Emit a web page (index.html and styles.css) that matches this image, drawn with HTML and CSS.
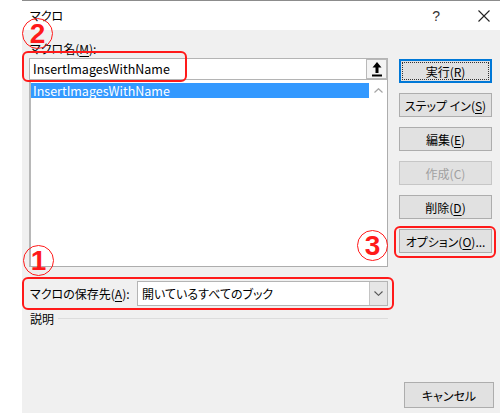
FILE: index.html
```html
<!DOCTYPE html>
<html lang="ja">
<head>
<meta charset="utf-8">
<title>マクロ</title>
<link rel="stylesheet" href="styles.css">
</head>
<body>
<div class="page">
  <div class="gutter"></div>
  <div class="dialog">
    <div class="titlebar">
      <span class="title">マクロ</span>
      <span class="help">?</span>
      <span class="close"><svg width="12" height="12" viewBox="0 0 12 12"><path d="M0.5 0.5 L11.5 11.5 M11.5 0.5 L0.5 11.5" stroke="#222" stroke-width="1.1" fill="none"/></svg></span>
    </div>
    <div class="content">
      <div class="main">
        <div class="name-label">マクロ名(<u>M</u>):</div>
        <div class="name-input">
          <span class="name-text">InsertImagesWithName</span>
          <span class="up-btn"><svg width="10" height="15" viewBox="0 0 10 15"><path d="M5 0 L9.5 5.5 L6.5 5.5 L6.5 11 L3.5 11 L3.5 5.5 L0.5 5.5 Z" fill="#000"/><rect x="0" y="12.5" width="10" height="2" fill="#000"/></svg></span>
        </div>
        <div class="listbox">
          <div class="items">
            <div class="item selected">InsertImagesWithName</div>
          </div>
          <div class="vscroll"><svg width="9" height="5" viewBox="0 0 9 5"><path d="M0.5 4.5 L4.5 0.7 L8.5 4.5" stroke="#a6a6a6" stroke-width="1.2" fill="none"/></svg></div>
        </div>
        <div class="store-row">
          <span class="store-label">マクロの保存先(<u>A</u>):</span>
          <div class="combo">
            <span class="combo-text">開いているすべてのブック</span>
            <span class="combo-btn"><svg width="9" height="5" viewBox="0 0 9 5"><path d="M0.5 0.5 L4.5 4.3 L8.5 0.5" stroke="#555" stroke-width="1.1" fill="none"/></svg></span>
          </div>
        </div>
        <div class="desc">
          <span>説明</span>
          <span class="rule"></span>
        </div>
      </div>
      <div class="side">
        <button class="btn default"><span class="focus">実行(<u>R</u>)</span></button>
        <button class="btn">ステップ イン(<u>S</u>)</button>
        <button class="btn">編集(<u>E</u>)</button>
        <button class="btn disabled">作成(C)</button>
        <button class="btn">削除(<u>D</u>)</button>
        <button class="btn">オプション(<u>O</u>)...</button>
        <button class="btn cancel">キャンセル</button>
      </div>
    </div>
    <span class="mark mark-2">2</span>
    <span class="box box-name"></span>
    <span class="mark mark-3">3</span>
    <span class="box box-option"></span>
    <span class="mark mark-1">1</span>
    <span class="box box-store"></span>
  </div>
</div>
</body>
</html>
```

FILE: styles.css
```css
* { box-sizing: border-box; }
html, body { margin: 0; padding: 0; }
body {
  width: 500px;
  height: 413px;
  overflow: hidden;
  background: #ffffff;
  font-family: "Noto Sans CJK JP", "Noto Sans", sans-serif;
  font-size: 12px;
  font-feature-settings: "palt";
  color: #000;
}
u { text-underline-offset: 2px; text-decoration-thickness: 1px; }

.page { display: flex; height: 413px; }
.gutter { width: 22px; flex: none; }
.dialog {
  position: relative;
  flex: 1;
  display: flex;
  flex-direction: column;
}

.titlebar {
  height: 30px;
  flex: none;
  background: #fff;
  border-top: 1px solid #8c8c8c;
  display: flex;
  align-items: center;
  padding-left: 8px;
}
.title { font-size: 12px; line-height: 14px; }
.help {
  margin-left: auto;
  font-family: "Liberation Sans", sans-serif;
  font-size: 14px;
  color: #333;
  margin-right: 38px;
}
.close { display: flex; margin-right: 10px; }

.content {
  flex: 1;
  background: #f0f0f0;
  display: flex;
}

.main {
  width: 366px;
  padding-left: 7px;
  display: flex;
  flex-direction: column;
}
.name-label {
  margin-top: 11px;
  height: 17px;
  line-height: 16px;
  padding-left: 1px;
}
.name-input {
  height: 22px;
  background: #fff;
  border: 1px solid #b4b4b4;
  display: flex;
  align-items: center;
}
.name-text {
  padding-left: 3px;
  font-size: 12.5px;
  line-height: 16px;
}
.up-btn {
  margin-left: auto;
  width: 21px;
  height: 20px;
  background: #f4f4f4;
  border: 1px solid #b9b9b9;
  display: flex;
  align-items: center;
  justify-content: center;
}

.listbox {
  height: 187px;
  background: #fff;
  border: 1px solid #adadad;
  border-left: 2px solid #b8b8b8;
  border-top: none;
  display: flex;
}
.items { flex: 1; padding-top: 3px; }
.item {
  height: 15px;
  line-height: 15px;
  padding-left: 2px;
  font-size: 12.5px;
}
.item.selected { background: #3399ff; color: #fff; }
.vscroll {
  width: 18px;
  display: flex;
  justify-content: center;
  padding-top: 8px;
}

.store-row {
  margin-top: 14px;
  height: 25px;
  display: flex;
  align-items: center;
  padding-left: 1px;
}
.store-label { line-height: 16px; }
.combo {
  margin-left: auto;
  width: 251px;
  height: 25px;
  background: #fff;
  border: 1px solid #b4b4b4;
  display: flex;
  align-items: center;
}
.combo-text { padding-left: 4px; line-height: 16px; }
.combo-btn {
  margin-left: auto;
  width: 18px;
  height: 23px;
  background: #e6e6e6;
  border-left: 1px solid #c4c4c4;
  display: flex;
  align-items: center;
  justify-content: center;
}

.desc {
  margin-top: 4px;
  display: flex;
  align-items: center;
  padding-left: 1px;
  height: 16px;
}
.rule {
  flex: 1;
  height: 1px;
  background: #dcdcdc;
  margin-left: 4px;
}

.side {
  margin-left: 11px;
  width: 95px;
  display: flex;
  flex-direction: column;
  padding-top: 29px;
  gap: 10px;
}
.btn {
  width: 93px;
  height: 24px;
  padding: 0;
  font: inherit;
  font-size: 12px;
  color: #000;
  background: #e1e1e1;
  border: 1px solid #adadad;
  display: flex;
  align-items: center;
  justify-content: center;
}
.btn.default {
  border: 1px solid #0078d7;
  box-shadow: inset 0 0 0 1px #0078d7;
  padding: 2px;
}
.focus {
  width: 100%;
  height: 100%;
  border: 1px dotted #333;
  display: flex;
  align-items: center;
  justify-content: center;
}
.btn.disabled { color: #a0a0a0; border-color: #c6c6c6; }
.btn.cancel {
  margin-top: auto;
  margin-bottom: 5px;
  margin-left: 5px;
  width: 90px;
  height: 26px;
}

.mark {
  position: absolute;
  width: 31px;
  height: 31px;
  border: 1.3px solid #ff1a1a;
  border-radius: 50%;
  color: #ff1a1a;
  font-family: "Liberation Sans", sans-serif;
  font-weight: bold;
  font-size: 28px;
  line-height: 30px;
  text-align: center;
}
.mark-2 { left: 0; top: 18px; }
.mark-3 { left: 335px; top: 230px; }
.mark-1 { left: 1px; top: 245px; }

.box {
  position: absolute;
  border: 2px solid #ff1a1a;
  border-radius: 6px;
}
.box-name { left: 0; top: 51px; width: 165px; height: 31px; }
.box-option { left: 372px; top: 226px; width: 102px; height: 32px; }
.box-store { left: 0; top: 277px; width: 372px; height: 33px; }
```
